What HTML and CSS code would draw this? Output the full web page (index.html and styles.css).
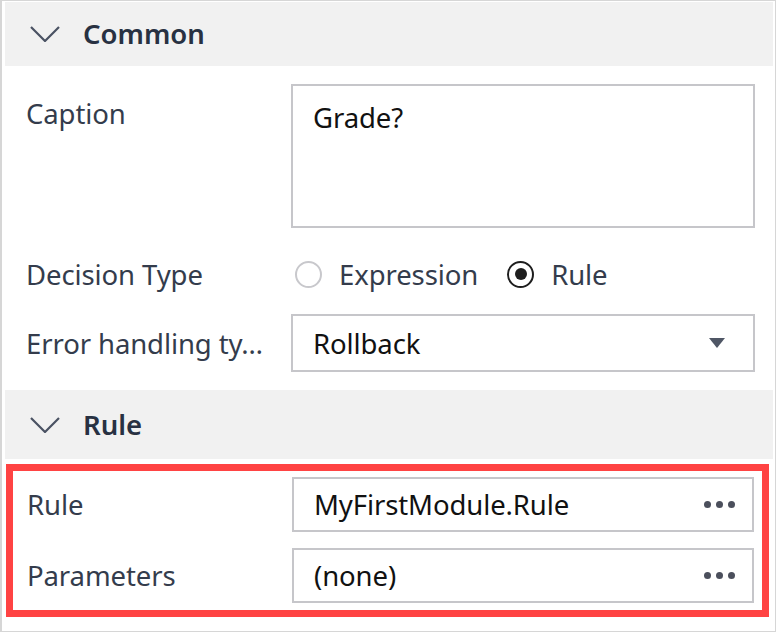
FILE: index.html
```html
<!DOCTYPE html>
<html>
<head>
<meta charset="utf-8">
<link rel="stylesheet" href="styles.css">
</head>
<body>
<div class="panel">
  <div class="section-head head-common">
    <svg class="chev" width="30" height="16" viewBox="0 0 30 16"><polyline points="1,1 15,15 29,1" fill="none" stroke="#4a5263" stroke-width="2.2"/></svg>
    <span class="head-title">Common</span>
  </div>
  <div class="rows rows-common">
    <div class="row row-caption">
      <div class="label">Caption</div>
      <div class="field textarea">Grade?</div>
    </div>
    <div class="row row-radio">
      <div class="label">Decision Type</div>
      <div class="radios">
        <span class="radio"></span><span class="radio-text">Expression</span>
        <span class="radio checked"></span><span class="radio-text">Rule</span>
      </div>
    </div>
    <div class="row row-select">
      <div class="label">Error handling ty…</div>
      <div class="field select"><span>Rollback</span><span class="tri"></span></div>
    </div>
  </div>
  <div class="section-head head-rule">
    <svg class="chev" width="30" height="16" viewBox="0 0 30 16"><polyline points="1,1 15,15 29,1" fill="none" stroke="#4a5263" stroke-width="2.2"/></svg>
    <span class="head-title">Rule</span>
  </div>
  <div class="highlight">
    <div class="row row-input">
      <div class="label">Rule</div>
      <div class="field input"><span>MyFirstModule.Rule</span><span class="dots"><i></i><i></i><i></i></span></div>
    </div>
    <div class="row row-input">
      <div class="label">Parameters</div>
      <div class="field input"><span>(none)</span><span class="dots"><i></i><i></i><i></i></span></div>
    </div>
  </div>
</div>
</body>
</html>
```

FILE: styles.css
```css
* { box-sizing: border-box; }
html, body { margin: 0; padding: 0; background: #fff; }
body { font-family: "Noto Sans", "Open Sans", sans-serif; }

.panel {
  width: 776px;
  height: 632px;
  border: 1px solid #d6d6d6;
  border-left-width: 2px;
  padding: 1px 2px 0 3px;
  overflow: hidden;
}

.section-head {
  background: #f1f1f1;
  display: flex;
  align-items: center;
  padding-left: 25px;
}
.head-common { height: 64px; }
.head-rule { height: 69px; margin-top: 18px; }
.chev { flex: none; margin-right: 23px; }
.head-title {
  font-size: 27.5px;
  font-weight: 600;
  color: #283142;
  line-height: 1;
}

.rows-common { padding: 18px 18px 0 21px; }

.row { display: flex; align-items: center; }
.label {
  width: 265px;
  flex: none;
  font-size: 27.5px;
  line-height: 1.2;
  color: #343c4c;
  white-space: nowrap;
  letter-spacing: -0.1px;
}
.field {
  flex: 1;
  border: 2px solid #c6c6ca;
  font-size: 27.5px;
  line-height: 1.2;
  color: #111;
  padding: 0 20px;
  letter-spacing: -0.1px;
}

.row-caption { align-items: flex-start; }
.row-caption .label { padding-top: 13px; }
.textarea { height: 144px; padding-top: 15px; }

.row-radio { height: 86px; padding-top: 6px; }
.radios { display: flex; align-items: center; padding-left: 4px; }
.radio {
  width: 27px; height: 27px;
  border: 2px solid #c8c8cc;
  border-radius: 50%;
  margin-right: 17px;
  position: relative;
  flex: none;
}
.radio.checked { border-color: #1e1e1e; margin-left: 29px; }
.radio.checked::after {
  content: "";
  position: absolute;
  left: 5.5px; top: 5.5px;
  width: 12px; height: 12px;
  border-radius: 50%;
  background: #1e1e1e;
}
.radio-text { font-size: 27.5px; line-height: 1.2; color: #343c4c; letter-spacing: -0.1px; }

.select {
  height: 58px;
  display: flex;
  align-items: center;
  justify-content: space-between;
}
.tri {
  width: 0; height: 0;
  border-left: 8px solid transparent;
  border-right: 8px solid transparent;
  border-top: 10px solid #4f5665;
  margin-right: 8px;
}

.highlight {
  margin: 5px 4px 0 1px;
  border: 7px solid #ff4343;
  padding: 6px 8px 7px 14px;
}
.row-input + .row-input { margin-top: 16px; }
.input {
  height: 55px;
  display: flex;
  align-items: center;
  justify-content: space-between;
}
.dots { display: flex; gap: 5px; margin-right: -3px; }
.dots i { width: 7px; height: 7px; border-radius: 50%; background: #4b4f5c; display: block; }
```
